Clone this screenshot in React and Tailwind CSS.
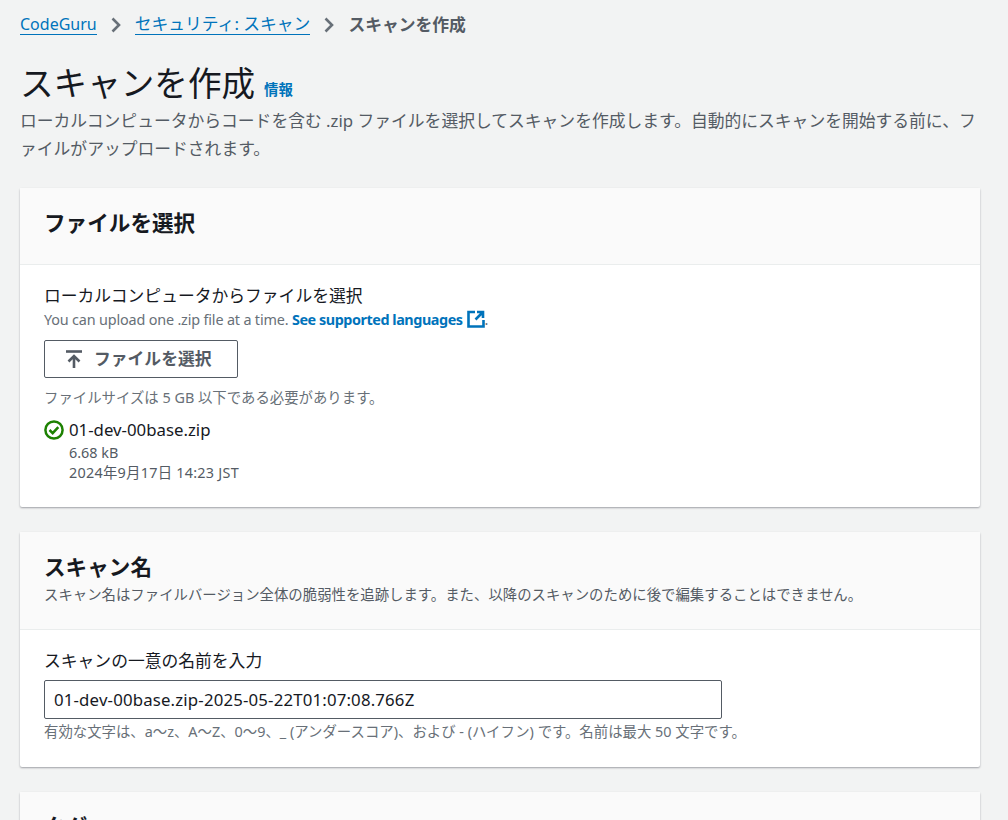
const chevronColor = '#687078';

function Chevron() {
  return (
    <svg width="16" height="16" viewBox="0 0 16 16" fill="none" className="mx-[11px] shrink-0">
      <path d="M4.5 1.5L11 8l-6.5 6.5" stroke={chevronColor} strokeWidth="2.6" />
    </svg>
  );
}

function ExternalIcon() {
  return (
    <svg width="18" height="18" viewBox="0 0 18 18" fill="none" className="inline-block align-[-3px] ml-[4px]">
      <path d="M8 2H1.5v14.5h15V10" stroke="#0073bb" strokeWidth="2.6" />
      <path d="M8.5 9.5L15 3M10 2h6v6" stroke="#0073bb" strokeWidth="2.6" />
    </svg>
  );
}

function UploadIcon() {
  return (
    <svg width="18" height="18" viewBox="0 0 18 18" fill="none" className="shrink-0">
      <path d="M1 1.5h16" stroke="#545b64" strokeWidth="2.6" />
      <path d="M9 18V6M3.5 11.5L9 6l5.5 5.5" stroke="#545b64" strokeWidth="2.6" />
    </svg>
  );
}

function Card({ header, children, className }) {
  return (
    <section className={`ml-5 mr-[28px] bg-white rounded-[2px] shadow-[0_1px_2px_rgba(0,7,22,0.35)] ${className}`}>
      {header}
      {children}
    </section>
  );
}

export default function App() {
  return (
    <div className="h-screen overflow-hidden bg-[#f2f3f3] text-[#16191f] font-['Noto_Sans','Noto_Sans_CJK_JP',sans-serif]">
      {/* パンくず */}
      <nav className="flex items-center pl-5 pt-[13px] h-[36px] text-[16.8px] leading-[22px]">
        <a className="text-[#0073bb] text-[16px] border-b border-[#0073bb] leading-[20px]">CodeGuru</a>
        <Chevron />
        <a className="text-[#0073bb] border-b border-[#0073bb] leading-[20px]">セキュリティ: スキャン</a>
        <Chevron />
        <span className="text-[#545b64] font-bold">スキャンを作成</span>
      </nav>

      {/* タイトル */}
      <div className="mt-[26px] px-5">
        <div className="flex items-end h-[42px]">
          <h1 className="text-[33.6px] leading-[42px] font-normal">スキャンを作成</h1>
          <a className="ml-[9px] text-[14.4px] leading-[18px] font-bold text-[#0073bb] mb-[5px]">情報</a>
        </div>
        <p className="mt-[3px] text-[16.8px] leading-[28px] text-[#545b64] max-w-[968px]">
          ローカルコンピュータからコードを含む .zip ファイルを選択してスキャンを作成します。自動的にスキャンを開始する前に、ファイルがアップロードされます。
        </p>
      </div>

      <Card
        className="mt-[25px] h-[319px]"
        header={
          <div className="h-[77px] bg-[#fafafa] border-b border-[#eaeded] px-[24px] pt-[20px]">
            <h2 className="text-[21.6px] leading-[30px] font-bold">ファイルを選択</h2>
          </div>
        }
      >
        <div className="pl-[24px] pt-[20px]">
          <div className="text-[16.8px] leading-[22px]">ローカルコンピュータからファイルを選択</div>
          <div className="text-[14.4px] leading-[20px] mt-[3px] text-[#687078] tracking-[-0.17px]">
            You can upload one .zip file at a time. <a className="font-bold text-[#0073bb] tracking-[-0.45px]">See supported languages<ExternalIcon /></a>.
          </div>
          <button className="mt-[10px] w-[194px] h-[38px] flex items-center pl-[20px] gap-[11px] bg-white border border-[#545b64] rounded-[2px] text-[#545b64] text-[16.8px] font-bold">
            <UploadIcon />
            ファイルを選択
          </button>
          <div className="mt-[10px] text-[14.4px] leading-[20px] text-[#687078]">ファイルサイズは 5 GB 以下である必要があります。</div>
          <div className="flex items-center gap-[5px] mt-[11px]">
            <svg width="20" height="20" viewBox="0 0 20 20" fill="none">
              <circle cx="10" cy="10" r="8.6" stroke="#1d8102" strokeWidth="2.5" />
              <path d="M5.5 10l3.2 3.2 5.6-6" stroke="#1d8102" strokeWidth="2.5" />
            </svg>
            <span className="text-[16.8px] leading-[22px]">01-dev-00base.zip</span>
          </div>
          <div className="pl-[25px] mt-[2px] text-[14.4px] leading-[20px] text-[#545b64]">
            <div>6.68 kB</div>
            <div className="tracking-[0.25px]">2024年9月17日 14:23 JST</div>
          </div>
        </div>
      </Card>

      <Card
        className="mt-[25px] h-[235px]"
        header={
          <div className="h-[98px] bg-[#fafafa] border-b border-[#eaeded] px-[24px] pt-[20px]">
            <h2 className="text-[21.6px] leading-[30px] font-bold">スキャン名</h2>
            <p className="mt-[3px] text-[14.4px] leading-[20px] text-[#545b64]">スキャン名はファイルバージョン全体の脆弱性を追跡します。また、以降のスキャンのために後で編集することはできません。</p>
          </div>
        }
      >
        <div className="pl-[24px] pt-[20px]">
          <div className="text-[16.8px] leading-[22px]">スキャンの一意の名前を入力</div>
          <input
            readOnly
            value="01-dev-00base.zip-2025-05-22T01:07:08.766Z"
            className="mt-[8px] block w-[678px] h-[39px] px-[9px] bg-white border border-[#545b64] rounded-[2px] text-[16.8px] tracking-[0.17px] text-[#16191f] outline-none"
          />
          <div className="mt-[3px] text-[14.4px] leading-[20px] text-[#687078]">有効な文字は、a〜z、A〜Z、0〜9、_ (アンダースコア)、および - (ハイフン) です。名前は最大 50 文字です。</div>
        </div>
      </Card>

      <Card
        className="mt-[25px] h-[200px]"
        header={
          <div className="h-[76px] bg-[#fafafa] border-b border-[#eaeded] px-[24px] pt-[20px]">
            <h2 className="text-[21.6px] leading-[30px] font-bold">タグ</h2>
          </div>
        }
      />
    </div>
  );
}
